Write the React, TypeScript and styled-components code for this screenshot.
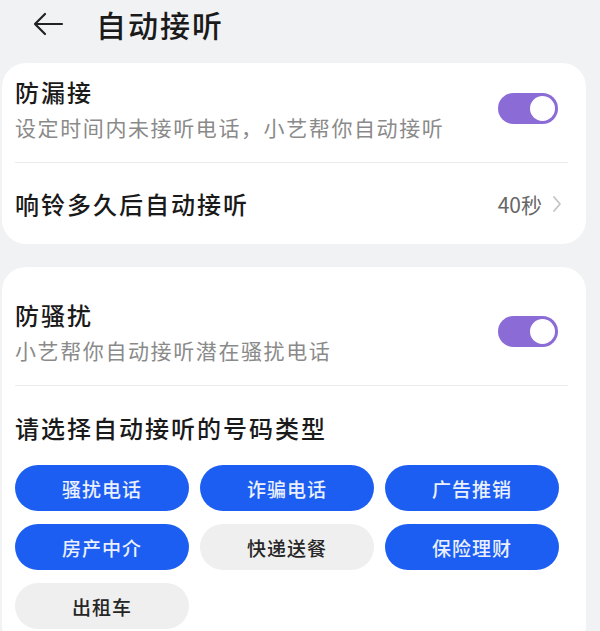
import styled, { createGlobalStyle } from "styled-components";

const GlobalStyle = createGlobalStyle`
  html, body {
    margin: 0;
    padding: 0;
    background: #f1f2f4;
  }
  body {
    font-family: "Noto Sans CJK SC", "Noto Sans", sans-serif;
    color: #1a1a1a;
  }
`;

const Page = styled.div`
  width: 600px;
  height: 631px;
  overflow: hidden;
  padding: 0 14px 0 2px;
  box-sizing: border-box;
`;

const Header = styled.div`
  height: 56px;
  display: flex;
  align-items: center;
  padding-left: 30px;
  gap: 32px;
  margin-top: -4px;
  margin-bottom: 11px;
`;

const Title = styled.h1`
  margin: 0;
  font-size: 30px;
  font-weight: 500;
  letter-spacing: 2px;
`;

const Card = styled.div<{ $top: number }>`
  background: #fff;
  border-radius: 24px;
  padding: ${(p) => p.$top}px 18px 0 13px;
  margin-bottom: 23px;
`;

const SwitchRow = styled.div<{ $bottom: number }>`
  display: flex;
  align-items: center;
  justify-content: space-between;
  padding-bottom: ${(p) => p.$bottom}px;
  border-bottom: 1px solid #ececec;
`;

const Texts = styled.div`
  display: flex;
  flex-direction: column;
`;

const ItemTitle = styled.div`
  font-size: 24px;
  line-height: 30px;
  font-weight: 500;
  letter-spacing: 2px;
`;

const ItemSub = styled.div`
  font-size: 21px;
  line-height: 26px;
  color: #8a8a8a;
  margin-top: 7px;
  letter-spacing: 1.6px;
`;

const Toggle = styled.div`
  width: 60px;
  height: 31px;
  border-radius: 16px;
  background: #8b6cd6;
  position: relative;
  margin-right: 10px;

  &::after {
    content: "";
    position: absolute;
    right: 3px;
    top: 3px;
    width: 25px;
    height: 25px;
    border-radius: 50%;
    background: #fff;
  }
`;

const LinkRow = styled.div`
  height: 81px;
  display: flex;
  align-items: center;
  justify-content: space-between;
`;

const Value = styled.div`
  display: flex;
  align-items: center;
  gap: 10px;
  font-size: 21px;
  color: #666;
  margin-right: 6px;
`;

const Prompt = styled.div`
  font-size: 24px;
  line-height: 30px;
  font-weight: 500;
  letter-spacing: 2px;
  margin: 27px 0 22px;
`;

const Chips = styled.div`
  display: grid;
  grid-template-columns: repeat(3, 174px);
  column-gap: 11px;
  row-gap: 13px;
  padding-bottom: 20px;
`;

const Chip = styled.div<{ $on?: boolean }>`
  height: 46px;
  border-radius: 23px;
  display: flex;
  align-items: center;
  justify-content: center;
  font-size: 19px;
  font-weight: 500;
  letter-spacing: 1px;
  background: ${(p) => (p.$on ? "#1d5ef2" : "#efefef")};
  color: ${(p) => (p.$on ? "#eaf0ff" : "#262626")};
`;

const chips = [
  { label: "骚扰电话", on: true },
  { label: "诈骗电话", on: true },
  { label: "广告推销", on: true },
  { label: "房产中介", on: true },
  { label: "快递送餐", on: false },
  { label: "保险理财", on: true },
  { label: "出租车", on: false },
];

function BackArrow() {
  return (
    <svg width="32" height="24" viewBox="0 0 32 24" fill="none">
      <path d="M30 12H3M13 2L3 12l10 10" stroke="#222" strokeWidth="2.2" strokeLinecap="round" strokeLinejoin="round" />
    </svg>
  );
}

function Chevron() {
  return (
    <svg width="10" height="18" viewBox="0 0 10 18" fill="none">
      <path d="M2 2l6 7-6 7" stroke="#c4c4c4" strokeWidth="1.8" strokeLinecap="round" strokeLinejoin="round" />
    </svg>
  );
}

export default function App() {
  return (
    <>
      <GlobalStyle />
      <Page>
        <Header>
          <BackArrow />
          <Title>自动接听</Title>
        </Header>

        <Card $top={14}>
          <SwitchRow $bottom={22}>
            <Texts>
              <ItemTitle>防漏接</ItemTitle>
              <ItemSub>设定时间内未接听电话，小艺帮你自动接听</ItemSub>
            </Texts>
            <Toggle />
          </SwitchRow>
          <LinkRow>
            <ItemTitle>响铃多久后自动接听</ItemTitle>
            <Value>
              40秒
              <Chevron />
            </Value>
          </LinkRow>
        </Card>

        <Card $top={33}>
          <SwitchRow $bottom={22}>
            <Texts>
              <ItemTitle>防骚扰</ItemTitle>
              <ItemSub>小艺帮你自动接听潜在骚扰电话</ItemSub>
            </Texts>
            <Toggle />
          </SwitchRow>
          <Prompt>请选择自动接听的号码类型</Prompt>
          <Chips>
            {chips.map((c) => (
              <Chip key={c.label} $on={c.on}>
                {c.label}
              </Chip>
            ))}
          </Chips>
        </Card>
      </Page>
    </>
  );
}
